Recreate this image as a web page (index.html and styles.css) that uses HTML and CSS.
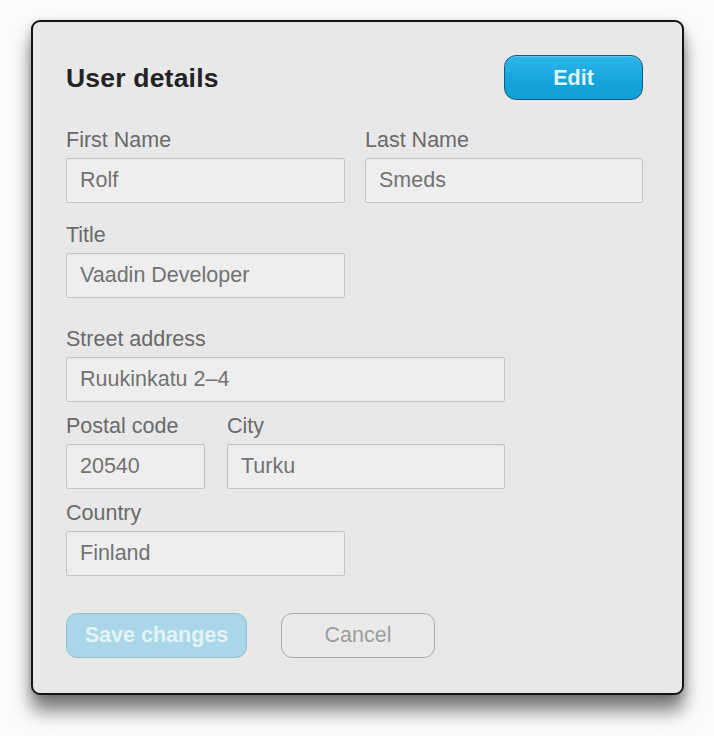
FILE: index.html
```html
<!DOCTYPE html>
<html lang="en">
<head>
<meta charset="utf-8">
<title>User details</title>
<link rel="stylesheet" href="styles.css">
</head>
<body>
<div class="panel">
  <div class="header">
    <h1 class="title">User details</h1>
    <button class="btn btn-edit" type="button">Edit</button>
  </div>
  <div class="section section-personal">
    <div class="row two">
      <label class="field"><span class="label">First Name</span><input class="input" value="Rolf" readonly></label>
      <label class="field"><span class="label">Last Name</span><input class="input" value="Smeds" readonly></label>
    </div>
    <div class="row two">
      <label class="field"><span class="label">Title</span><input class="input" value="Vaadin Developer" readonly></label>
    </div>
  </div>
  <div class="section section-address">
    <div class="row street">
      <label class="field"><span class="label">Street address</span><input class="input" value="Ruukinkatu 2–4" readonly></label>
    </div>
    <div class="row postal">
      <label class="field"><span class="label">Postal code</span><input class="input" value="20540" readonly></label>
      <label class="field"><span class="label">City</span><input class="input" value="Turku" readonly></label>
    </div>
    <div class="row two">
      <label class="field"><span class="label">Country</span><input class="input" value="Finland" readonly></label>
    </div>
  </div>
  <div class="actions">
    <button class="btn btn-save" type="button">Save changes</button>
    <button class="btn btn-cancel" type="button">Cancel</button>
  </div>
</div>
</body>
</html>
```
FILE: styles.css
```css
* { box-sizing: border-box; }
html, body { margin: 0; }
body {
  background: #fbfbfb;
  font-family: "Liberation Sans", Arial, Helvetica, sans-serif;
  padding: 20px 0 0 31px;
  width: 714px;
  height: 736px;
  overflow: hidden;
}
.panel {
  width: 653px;
  height: 675px;
  background: #e9e8e9;
  border: 2px solid #141414;
  border-radius: 9px;
  padding: 33px 39px 0 33px;
  box-shadow: 0 16px 18px rgba(0,0,0,0.5), 0 2px 8px rgba(0,0,0,0.18);
}
.header {
  display: flex;
  align-items: center;
  justify-content: space-between;
  height: 44px;
}
.title {
  margin: 0;
  font-size: 26.5px;
  font-weight: bold;
  color: #232323;
  letter-spacing: 0.2px;
  line-height: 32px;
  padding-top: 2px;
}
.btn {
  font-family: "Liberation Sans", Arial, Helvetica, sans-serif;
  font-size: 21.5px;
  height: 45px;
  border-radius: 11px;
  padding: 0;
  cursor: pointer;
}
.btn-edit {
  width: 139px;
  height: 45px;
  padding-top: 2px;
  font-weight: bold;
  color: #e2f5fc;
  background: linear-gradient(#2db7ea, #14a4dc 60%, #0f9ed6);
  border: 1px solid #1d5776;
  border-radius: 12px;
  box-shadow: inset 0 1px 0 rgba(255,255,255,0.25);
}
.section {
  display: flex;
  flex-direction: column;
}
.section-personal { margin-top: 29px; gap: 20px; }
.section-address { margin-top: 29px; gap: 12px; }
.row {
  display: grid;
  column-gap: 20px;
}
.row.two { grid-template-columns: 279px 278px; }
.row.street { grid-template-columns: 439px; }
.row.postal { grid-template-columns: 139px 278px; column-gap: 22px; }
.field {
  display: flex;
  flex-direction: column;
  gap: 6px;
}
.label {
  font-size: 21.5px;
  line-height: 24px;
  color: #6a6a6a;
}
.input {
  height: 45px;
  width: 100%;
  margin: 0;
  padding: 0 13px;
  font-family: "Liberation Sans", Arial, Helvetica, sans-serif;
  font-size: 21.5px;
  color: #727272;
  background: #efeeef;
  border: 1px solid #c6c6c6;
  border-radius: 2px;
  box-shadow: inset 0 1px 2px rgba(0,0,0,0.04);
  outline: none;
}
.actions {
  display: flex;
  gap: 34px;
  margin-top: 37px;
}
.btn-save {
  width: 181px;
  font-weight: bold;
  color: #e4f3f8;
  background: #a9d7e7;
  border: 1px solid #94c0cf;
  border-radius: 11px;
}
.btn-cancel {
  width: 154px;
  color: #9c9c9c;
  background: #ebeaeb;
  border: 1px solid #ababab;
  border-radius: 11px;
}
```
